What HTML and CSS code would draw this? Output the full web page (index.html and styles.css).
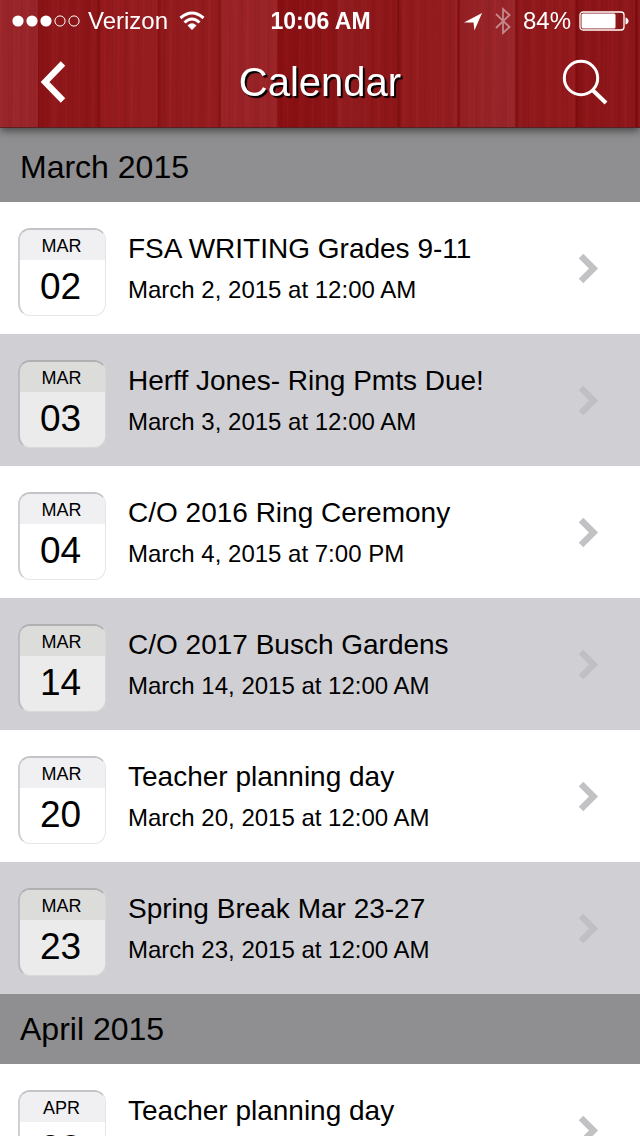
FILE: index.html
```html
<!DOCTYPE html>
<html lang="en">

<head>
  <meta charset="UTF-8">
  <meta name="viewport" content="width=device-width, initial-scale=1.0">
  <title>Calendar</title>
  <link rel="stylesheet" href="styles.css">
</head>

<body>
  <!-- chevron shared by all rows -->
  <svg class="sprite" aria-hidden="true">
    <symbol id="arrow" viewBox="0 0 20 32">
      <path d="M2 3 L14.500 15.500 L2 28" fill="none" stroke="currentColor" stroke-width="6.500" />
    </symbol>
  </svg>

  <header class="header">
    <div class="status">
      <div class="status-left">
        <svg class="signal" viewBox="0 0 68 12">
          <g fill="#fff">
            <circle cx="6" cy="6" r="5.600" />
            <circle cx="20" cy="6" r="5.600" />
            <circle cx="34" cy="6" r="5.600" />
          </g>
          <g fill="none" stroke="#fff">
            <circle cx="48" cy="6" r="5.100" />
            <circle cx="62" cy="6" r="5.100" />
          </g>
        </svg>
        <span>Verizon</span>
        <svg class="wifi" viewBox="0 0 26 20">
          <g fill="none" stroke="#fff" stroke-width="3">
            <path d="M1.500 7 Q13 -3 24.500 7" />
            <path d="M5.500 11.500 Q13 4.500 20.500 11.500" />
          </g>
          <path d="M8.500 14.500 Q13 10 17.500 14.500 L13 19 Z" fill="#fff" />
        </svg>
      </div>
      <div class="time">10:06 AM</div>
      <div class="status-right">
        <svg class="location" viewBox="0 0 20 20">
          <path d="M19 1 L0 11 L10 11 L11 19.500 Z" fill="#fff" />
        </svg>
        <svg class="bluetooth" viewBox="0 0 16 28">
          <path d="M1 7 L14.500 20 L8 26 L8 2 L14.500 8 L1 21" fill="none" stroke="#fff" stroke-width="1.800" />
        </svg>
        <span>84%</span>
        <svg class="battery" viewBox="0 0 50 20">
          <rect x="1" y="1" width="44" height="18" rx="3" fill="none" stroke="#fff" stroke-width="1.300" />
          <rect x="2.500" y="2.500" width="34" height="15" rx="1.500" fill="#fff" />
          <path d="M46.500 6.500 Q49.500 7.500 49.500 10 T46.500 13.500 Z" fill="#fff" />
        </svg>
      </div>
    </div>

    <div class="navbar">
      <button class="nav-button" aria-label="Back">
        <svg class="back-icon" viewBox="0 0 28 44">
          <path d="M23 3.500 L5 22 L23 40.500" fill="none" stroke="#fff" stroke-width="6.200" />
        </svg>
      </button>
      <h1>Calendar</h1>
      <button class="nav-button" aria-label="Search">
        <svg class="search-icon" viewBox="0 0 46 46">
          <g fill="none" stroke="#fff">
            <circle cx="19" cy="19" r="16.700" stroke-width="3" />
            <path d="M30.500 31 L44 44" stroke-width="4" />
          </g>
        </svg>
      </button>
    </div>
  </header>

  <main class="calendar">
    <h2>March 2015</h2>
    <ul class="events">
      <li>
        <a class="event" href="#">
          <span class="date"><span class="month">MAR</span><span class="day">02</span></span>
          <span class="info"><span class="name">FSA WRITING Grades 9-11</span><span class="when">March 2, 2015 at 12:00 AM</span></span>
          <svg class="arrow"><use href="#arrow" /></svg>
        </a>
      </li>
      <li>
        <a class="event" href="#">
          <span class="date"><span class="month">MAR</span><span class="day">03</span></span>
          <span class="info"><span class="name">Herff Jones- Ring Pmts Due!</span><span class="when">March 3, 2015 at 12:00 AM</span></span>
          <svg class="arrow"><use href="#arrow" /></svg>
        </a>
      </li>
      <li>
        <a class="event" href="#">
          <span class="date"><span class="month">MAR</span><span class="day">04</span></span>
          <span class="info"><span class="name">C/O 2016 Ring Ceremony</span><span class="when">March 4, 2015 at 7:00 PM</span></span>
          <svg class="arrow"><use href="#arrow" /></svg>
        </a>
      </li>
      <li>
        <a class="event" href="#">
          <span class="date"><span class="month">MAR</span><span class="day">14</span></span>
          <span class="info"><span class="name">C/O 2017 Busch Gardens</span><span class="when">March 14, 2015 at 12:00 AM</span></span>
          <svg class="arrow"><use href="#arrow" /></svg>
        </a>
      </li>
      <li>
        <a class="event" href="#">
          <span class="date"><span class="month">MAR</span><span class="day">20</span></span>
          <span class="info"><span class="name">Teacher planning day</span><span class="when">March 20, 2015 at 12:00 AM</span></span>
          <svg class="arrow"><use href="#arrow" /></svg>
        </a>
      </li>
      <li>
        <a class="event" href="#">
          <span class="date"><span class="month">MAR</span><span class="day">23</span></span>
          <span class="info"><span class="name">Spring Break Mar 23-27</span><span class="when">March 23, 2015 at 12:00 AM</span></span>
          <svg class="arrow"><use href="#arrow" /></svg>
        </a>
      </li>
    </ul>

    <h2>April 2015</h2>
    <ul class="events">
      <li>
        <a class="event" href="#">
          <span class="date"><span class="month">APR</span><span class="day">03</span></span>
          <span class="info"><span class="name">Teacher planning day</span><span class="when">April 3, 2015 at 12:00 AM</span></span>
          <svg class="arrow"><use href="#arrow" /></svg>
        </a>
      </li>
    </ul>
  </main>
</body>

</html>
```
FILE: styles.css
```css
* {
  box-sizing: border-box;
}

body {
  margin: 0;
  height: 100vh;
  display: flex;
  flex-direction: column;
  overflow: hidden;
  font-family: "Liberation Sans", Arial, sans-serif;
  color: #000;
  background-color: #fff;
}

h1, h2, ul {
  margin: 0;
  padding: 0;
  font-weight: normal;
}

.sprite {
  display: none;
}

/* header with red wood planks */
.header {
  position: relative;
  z-index: 1;
  flex: none;
  color: #fff;
  border-bottom: 1px solid #5c2022;
  box-shadow: 0 3px 8px rgba(0, 0, 0, 0.5);
  background-color: #931b1e;
  background-image:
    repeating-linear-gradient(90deg, rgba(255, 90, 90, 0.04) 0 2px, transparent 3px 7px, rgba(60, 0, 0, 0.05) 8px 9px, transparent 10px 13px),
    repeating-linear-gradient(91deg, rgba(255, 120, 110, 0.03) 0 1px, transparent 2px 11px, rgba(60, 0, 0, 0.04) 12px 14px, transparent 15px 19px),
    linear-gradient(90deg,
      #98252a 0 36px, #981f22 38px,
      #820e11 38px, #8f171a 50px, #8c1518 97px,
      #7c0e10 98px, #94191c 101px, #951d20 157px,
      #830d10 158px, #911a1d 162px, #941c1f 218px,
      #840f12 219px, #982226 222px, #992327 277px,
      #891013 278px, #880f12 280px, #8b1518 337px,
      #911c1f 338px, #8c1517 397px,
      #790b0e 398px, #921a1d 402px, #941d20 457px,
      #7a0a0d 458px, #952024 461px, #98262a 515px,
      #800c0f 516px, #8e181b 519px, #93191c 575px,
      #7c0a0d 576px, #8b1417 580px, #8d171a 635px,
      #740709 636px, #921a1e 640px);
}

.status {
  display: grid;
  grid-template-columns: 1fr auto 1fr;
  align-items: center;
  height: 42px;
  padding: 0 11px 0 12px;
  font-size: 24px;
}

.status-left,
.status-right {
  display: flex;
  align-items: center;
}

.status-left {
  gap: 8px;
}

.status-right {
  justify-content: flex-end;
  gap: 8px;
}

.signal {
  width: 68px;
  height: 12px;
}

.wifi {
  width: 26px;
  height: 20px;
  margin-left: 3px;
}

.time {
  font-size: 23px;
  font-weight: bold;
}

.location {
  width: 19px;
  height: 19px;
}

.bluetooth {
  width: 16px;
  height: 28px;
  margin: 0 4px;
  opacity: 0.45;
}

.battery {
  width: 50px;
  height: 20px;
}

.navbar {
  display: flex;
  align-items: center;
  justify-content: space-between;
  height: 85px;
  padding: 0 32px 6px 40px;
}

.navbar h1 {
  flex: 1;
  padding-right: 8px;
  font-size: 40px;
  line-height: 48px;
  text-align: center;
  text-shadow: 2px 2px 1px #000;
}

.nav-button {
  display: flex;
  width: 46px;
  padding: 0;
  border: none;
  background: none;
  cursor: pointer;
}

.back-icon {
  width: 28px;
  height: 44px;
}

.search-icon {
  width: 46px;
  height: 46px;
}

/* event list */
.calendar {
  flex: 1;
  min-height: 0;
  padding-top: 4px;
  overflow-y: auto;
  scrollbar-width: none;
  background-color: #8f8e90;
}

.calendar h2 {
  padding: 0 20px;
  font-size: 32px;
  line-height: 70px;
  background-color: #8f8e90;
}

.events {
  list-style: none;
}

.event {
  display: flex;
  align-items: center;
  height: 132px;
  padding: 2px 41px 0 18px;
  color: #000;
  text-decoration: none;
  background-color: #fff;
}

.date {
  width: 88px;
  height: 88px;
  margin-top: 6px;
  overflow: hidden;
  text-align: center;
  border: 1px solid #e6e6ea;
  border-top: 2px solid #c4c4c8;
  border-left: 2px solid #d0d0d4;
  border-radius: 12px;
  background-color: #fff;
}

.month,
.day,
.name,
.when {
  display: block;
}

.month {
  padding: 2px 2px 0 0;
  font-size: 18px;
  line-height: 28px;
  background-color: #f0f0f2;
}

.day {
  padding-right: 4px;
  font-size: 37px;
  line-height: 54px;
}

.info {
  flex: 1;
  margin-left: 22px;
}

.name {
  font-size: 28px;
  line-height: 42px;
}

.when {
  font-size: 24px;
  line-height: 40px;
}

.arrow {
  width: 20px;
  height: 32px;
  color: #c2c1c4;
}

.events li:nth-child(even) .event {
  background-color: #d0cfd4;
}

.events li:nth-child(even) .date {
  border-color: #b0b0b2 #d8d8da #d8d8da #bcbcc0;
  background-color: #ebebeb;
}

.events li:nth-child(even) .month {
  background-color: #dcdcdb;
}

.events li:nth-child(even) .arrow {
  color: #c0bfc2;
}
```
